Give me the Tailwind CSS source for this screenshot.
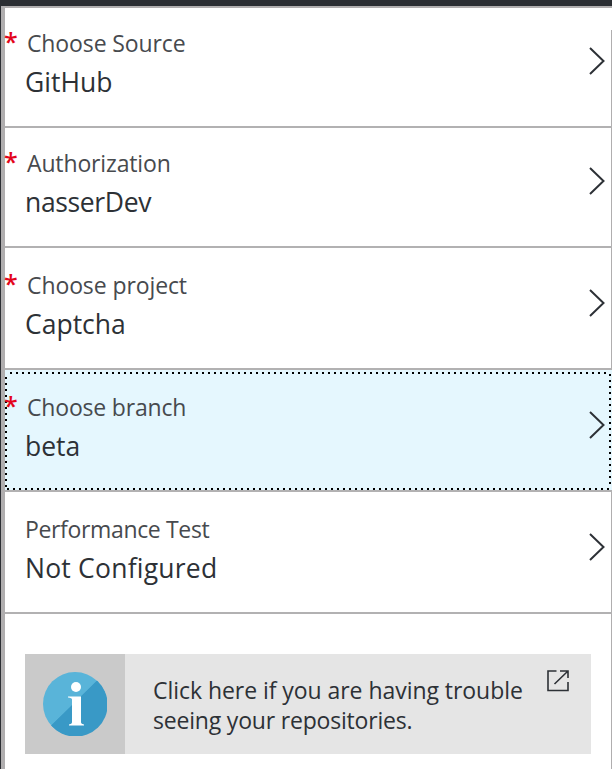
<!DOCTYPE html>
<html lang="en">
<head>
<meta charset="utf-8">
<title>Deployment source</title>
<script src="https://cdn.jsdelivr.net/npm/@tailwindcss/browser@4"></script>
</head>
<body class="h-[769px] w-[612px] overflow-hidden bg-[#2b2e33] font-['Open_Sans','Noto_Sans',sans-serif] text-[#2d3136]">
<main class="relative mt-[6px] ml-px flex h-[763px] flex-col border-t-2 border-l-4 border-[#b0aeaf] bg-white">
  <div class="absolute right-0 bottom-0 h-[739px] w-px bg-[#b0aeaf]"></div>
  <section class="relative flex h-[120px] border-b-2 border-[#b2b1b2]">
    <span class="-ml-px w-[21px] shrink-0 pt-[17px] text-[25px] font-semibold leading-[32px] text-[#e3051b]">*</span>
    <div class="flex grow flex-col whitespace-nowrap pt-[19px]">
      <span class="pl-[2px] text-[23px] leading-[32px] tracking-[-0.12px] text-[#474a4e]">Choose Source</span>
      <span class="pt-px text-[26.5px] leading-[44px]">GitHub</span>
    </div>
    <svg class="mt-[38px] mr-[4px] h-[30px] w-[20px] shrink-0" viewBox="0 0 20 30" fill="none" stroke="#2d3136" stroke-width="2"><path d="M2 2 15.500 15 2 28"/></svg>
  </section>
  <section class="relative flex h-[120px] border-b-2 border-[#b2b1b2]">
    <span class="-ml-px w-[21px] shrink-0 pt-[17px] text-[25px] font-semibold leading-[32px] text-[#e3051b]">*</span>
    <div class="flex grow flex-col whitespace-nowrap pt-[19px]">
      <span class="pl-[2px] text-[23px] leading-[32px] tracking-[-0.14px] text-[#474a4e]">Authorization</span>
      <span class="pt-px text-[26.5px] leading-[44px] tracking-[-0.35px]">nasserDev</span>
    </div>
    <svg class="mt-[38px] mr-[4px] h-[30px] w-[20px] shrink-0" viewBox="0 0 20 30" fill="none" stroke="#2d3136" stroke-width="2"><path d="M2 2 15.500 15 2 28"/></svg>
  </section>
  <section class="relative flex h-[122px] border-b-2 border-[#b2b1b2] pt-[2px]">
    <span class="-ml-px w-[21px] shrink-0 pt-[17px] text-[25px] font-semibold leading-[32px] text-[#e3051b]">*</span>
    <div class="flex grow flex-col whitespace-nowrap pt-[19px]">
      <span class="pl-[2px] text-[23px] leading-[32px] tracking-[-0.1px] text-[#474a4e]">Choose project</span>
      <span class="pt-px text-[26.5px] leading-[44px]">Captcha</span>
    </div>
    <svg class="mt-[38px] mr-[4px] h-[30px] w-[20px] shrink-0" viewBox="0 0 20 30" fill="none" stroke="#2d3136" stroke-width="2"><path d="M2 2 15.500 15 2 28"/></svg>
  </section>
  <section class="relative flex h-[122px] border-b-2 border-[#b2b1b2] bg-[#e5f7fe] pt-[2px]">
    <svg class="absolute inset-0 h-[120px] w-[607px]" viewBox="0 0 607 120" fill="none" stroke="#000" stroke-width="2"><g stroke-dasharray="2 4"><path d="M5 3H605M2 119H605M1 7V118M605 4V118"/></g></svg>
    <span class="relative -ml-px w-[21px] shrink-0 pt-[17px] text-[25px] font-semibold leading-[32px] text-[#e3051b]">*</span>
    <div class="flex grow flex-col whitespace-nowrap pt-[19px]">
      <span class="pl-[2px] text-[23px] leading-[32px] tracking-[-0.18px] text-[#474a4e]">Choose branch</span>
      <span class="pt-px text-[26.5px] leading-[44px]">beta</span>
    </div>
    <svg class="mt-[38px] mr-[4px] h-[30px] w-[20px] shrink-0" viewBox="0 0 20 30" fill="none" stroke="#2d3136" stroke-width="2"><path d="M2 2 15.500 15 2 28"/></svg>
  </section>
  <section class="relative flex h-[122px] border-b-2 border-[#b2b1b2] pt-[2px]">
    <div class="flex grow flex-col whitespace-nowrap pt-[19px] pl-[20px]">
      <span class="text-[23px] leading-[32px] tracking-[-0.35px] text-[#474a4e]">Performance Test</span>
      <span class="pt-px text-[26.5px] leading-[44px] tracking-[0.22px]">Not Configured</span>
    </div>
    <svg class="mt-[38px] mr-[4px] h-[30px] w-[20px] shrink-0" viewBox="0 0 20 30" fill="none" stroke="#2d3136" stroke-width="2"><path d="M2 2 15.500 15 2 28"/></svg>
  </section>
  <aside class="mt-[40px] ml-[20px] flex h-[100px] w-[566px] bg-[#e5e5e5]">
    <div class="flex w-[100px] shrink-0 items-center justify-center bg-[#cacaca]">
      <svg class="size-[64px]" viewBox="0 0 64 64"><circle cx="32" cy="32" r="32" fill="#59b4d9"/><path d="M54 8.800A32 32 0 0 1 8.300 53.400Z" fill="#3999c6"/><path d="M54 8.800A32 32 0 1 1 8.300 53.400Z" fill="#3999c6"/><circle cx="33" cy="15" r="5" fill="#fff"/><path d="M25 24.500H38V50.500Q38 52 41 52.500V53.500H26V52.500Q29 52 29 50.500V27.500Q29 26 25 25.500Z" fill="#fff"/></svg>
    </div>
    <p class="grow pt-[21px] pl-[28px] text-[23px] leading-[30px] tracking-[-0.05px] whitespace-nowrap">Click here if you are having trouble<br><span class="tracking-[-0.19px]">seeing your repositories.</span></p>
    <svg class="mt-[15px] mr-[21px] size-[24px] shrink-0" viewBox="0 0 24 24" fill="none" stroke="#2d3136" stroke-width="1.600"><path d="M10.500 2H2V21.500H22V13M14 2H22V9M8.500 15 22 2"/></svg>
  </aside>
</main>
</body>
</html>
